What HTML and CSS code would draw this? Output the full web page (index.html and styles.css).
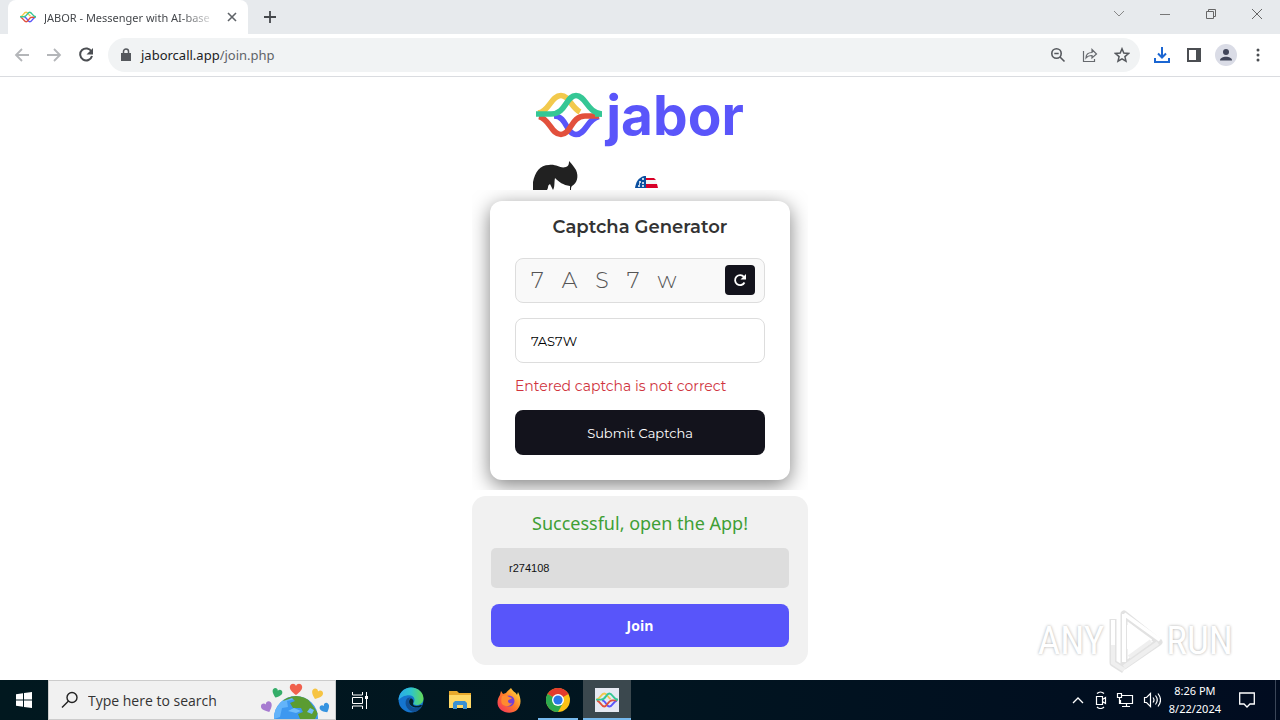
FILE: index.html
```html
<!DOCTYPE html>
<html lang="en">

<head>
  <meta charset="UTF-8" />
  <meta name="viewport" content="width=device-width, initial-scale=1.0" />
  <title>JABOR - Messenger with AI-based translation</title>
  <link rel="stylesheet" href="styles.css">
</head>

<body>

  <!-- Shared wave mark -->
  <svg class="defs" width="0" height="0" aria-hidden="true">
    <symbol id="wave" viewBox="0 0 66 46">
      <g fill="none" stroke-width="5.600">
        <path stroke="#f2c94c" d="M2 21C13 20 15 3.500 25 3.500C33 3.500 35 15 44 20" />
        <path stroke="#5a55fa" d="M18 24C31 24 30 42.500 40 42.500S51 27 63 24.500" />
        <path stroke="#e2503c" d="M3 24.500C14 27 15 42.500 25 42.500S35 24 49 24H63" />
        <path stroke="#35c795" d="M0 22H15C30 22 30 3.500 40 3.500C50 3.500 51 21 66 22" />
        <path stroke="#35c795" stroke-width="5" d="M59 22.300H66" />
      </g>
    </symbol>
  </svg>

  <!-- Browser tabs -->
  <header class="tab-bar">
    <div class="tab">
      <svg class="tab-icon" width="16" height="14"><use href="#wave" /></svg>
      <span class="tab-title">JABOR - Messenger with AI-base</span>
      <button class="icon-btn" aria-label="Close tab">
        <svg width="10" height="10" viewBox="0 0 10 10"><path d="M1 1l8 8M9 1l-8 8" stroke="#5f6368" stroke-width="1.600" /></svg>
      </button>
    </div>
    <button class="icon-btn new-tab" aria-label="New tab">
      <svg width="12" height="12" viewBox="0 0 12 12"><path d="M6 0v12M0 6h12" stroke="#45484c" stroke-width="1.800" /></svg>
    </button>
    <div class="window-controls">
      <button class="icon-btn" aria-label="Search tabs">
        <svg width="12" height="12" viewBox="0 0 12 12"><path d="M1 3l5 5 5-5" fill="none" stroke="#888" /></svg>
      </button>
      <button class="icon-btn" aria-label="Minimize">
        <svg width="12" height="12" viewBox="0 0 12 12"><path d="M1 6.500h10" stroke="#777" /></svg>
      </button>
      <button class="icon-btn" aria-label="Restore">
        <svg width="12" height="12" viewBox="0 0 12 12"><path d="M1.500 3.500h7v7h-7zM3.500 3.500v-2h7v7h-2" fill="none" stroke="#666" /></svg>
      </button>
      <button class="icon-btn" aria-label="Close">
        <svg width="12" height="12" viewBox="0 0 12 12"><path d="M1 1l10 10M11 1L1 11" stroke="#666" /></svg>
      </button>
    </div>
  </header>

  <!-- Toolbar -->
  <nav class="toolbar">
    <button class="icon-btn" aria-label="Back">
      <svg width="16" height="16" viewBox="0 0 16 16"><path d="M15 8H2M8 2L2 8l6 6" fill="none" stroke="#b4b6b9" stroke-width="1.800" /></svg>
    </button>
    <button class="icon-btn" aria-label="Forward">
      <svg width="16" height="16" viewBox="0 0 16 16"><path d="M1 8h13M8 2l6 6-6 6" fill="none" stroke="#b4b6b9" stroke-width="1.800" /></svg>
    </button>
    <button class="icon-btn" aria-label="Reload">
      <svg width="16" height="16" viewBox="0 0 16 16"><path d="M13.500 4.600A6 6 0 1 0 14 9" fill="none" stroke="#4b4e52" stroke-width="2" /><path d="M15 1v6.500H8.500z" fill="#4b4e52" /></svg>
    </button>
    <div class="address-bar">
      <svg width="10" height="14" viewBox="0 0 10 14"><path d="M0 5h10v8H0z" fill="#55585d" /><path d="M2.500 6V3.500a2.500 2.500 0 0 1 5 0V6" fill="none" stroke="#55585d" stroke-width="1.500" /></svg>
      <a class="url" href="#">jaborcall.app<span>/join.php</span></a>
      <button class="icon-btn" aria-label="Zoom">
        <svg width="16" height="16" viewBox="0 0 16 16"><circle cx="6.500" cy="6.500" r="4.700" fill="none" stroke="#55585d" stroke-width="1.600" /><path d="M10 10l4.500 4.500M4.300 6.500h4.400" stroke="#55585d" stroke-width="1.600" /></svg>
      </button>
      <button class="icon-btn" aria-label="Share">
        <svg width="16" height="16" viewBox="0 0 16 16"><path d="M1.500 4v10.500h11V12M4 11c0-4 2-5.500 6-5.500V2.500L14.500 7 10 11V8.500C7 8.500 5.500 9 4 11z" fill="none" stroke="#66696e" stroke-width="1.200" /></svg>
      </button>
      <button class="icon-btn" aria-label="Bookmark">
        <svg width="16" height="16" viewBox="0 0 16 16"><path d="M8 1.800l1.800 4.300 4.700.4-3.600 3.100 1.100 4.600L8 11.800l-4 2.400 1.100-4.600L1.500 6.500l4.700-.4z" fill="none" stroke="#55585d" stroke-width="1.500" /></svg>
      </button>
    </div>
    <button class="icon-btn" aria-label="Downloads">
      <svg width="18" height="18" viewBox="0 0 18 18"><path d="M9 1v10M5 7.500l4 4 4-4M2 12v4h14v-4" fill="none" stroke="#1b66d2" stroke-width="2" /></svg>
    </button>
    <button class="icon-btn" aria-label="Side panel">
      <svg width="14" height="14" viewBox="0 0 14 14"><path d="M1 1h12v12H1z" fill="none" stroke="#4b4e52" stroke-width="2" /><path d="M9 1h4v12H9z" fill="#4b4e52" /></svg>
    </button>
    <button class="icon-btn" aria-label="Profile">
      <svg width="22" height="22" viewBox="0 0 22 22"><circle cx="11" cy="11" r="11" fill="#dadce6" /><circle cx="11" cy="8" r="3" fill="#41465a" /><path d="M5 16.500c0-5 12-5 12 0z" fill="#41465a" /></svg>
    </button>
    <button class="icon-btn" aria-label="Menu">
      <svg width="4" height="14" viewBox="0 0 4 14"><g fill="#4b4e52"><circle cx="2" cy="2" r="1.500" /><circle cx="2" cy="7" r="1.500" /><circle cx="2" cy="12" r="1.500" /></g></svg>
    </button>
  </nav>

  <!-- Page -->
  <main class="page">
    <h1 class="logo">
      <svg width="66" height="46"><use href="#wave" /></svg>
      <span>jabor</span>
    </h1>

    <div class="badges">
      <svg width="48" height="30" viewBox="0 0 48 30">
        <path d="M1 30V22C3 12 8 5 17 5c8-1 11 4 17 2 3-1 3-4 3-6 3 3 5 6 7 9 3 7 1 13-4 16-1 1-1 2-1 4h-1v-4c-7-1-11-4-15-8-1 5 0 9-2 12l-3-6c-3 2-1 3-3 6z" fill="#212121" />
      </svg>
      <svg width="24" height="14" viewBox="0 0 24 14">
        <path d="M1 12C2 6 4 2 10 0h2v12z" fill="#0b50a0" />
        <path d="M12 2h8l2 2H12zM12 8h11l1 4H12z" fill="#d80027" />
        <path d="M12 4h10l1 4H12z" fill="#f3f3f3" />
        <path d="M5 6h2M8 3h2M8 7h2M4 10h2M8 10h2M5 8h1" stroke="#fff" stroke-width="1.600" />
      </svg>
    </div>

    <section class="captcha-frame">
      <form class="captcha">
        <h2>Captcha Generator</h2>
        <div class="captcha-code">
          <output><span>7</span> <span>A</span> <span>S</span> <span>7</span> <span>w</span></output>
          <button type="button" class="refresh" aria-label="Refresh captcha">
            <svg width="14" height="14" viewBox="0 0 14 14"><path d="M11 4A5 5 0 1 0 11.500 9.500" fill="none" stroke="#fff" stroke-width="1.800" /><path d="M13 1v5.500H7.500z" fill="#fff" /></svg>
          </button>
        </div>
        <input type="text" value="7AS7W" aria-label="Enter captcha" />
        <p class="message">Entered captcha is not correct</p>
        <button type="submit" class="submit">Submit Captcha</button>
      </form>
    </section>

    <form class="join">
      <label for="room">Successful, open the App!</label>
      <input type="text" id="room" value="r274108" />
      <button type="submit">Join</button>
    </form>
  </main>

  <!-- Watermark -->
  <div class="watermark">
    <span>ANY</span>
    <svg width="60" height="64" viewBox="0 0 60 64">
      <path d="M19 5v52L54 33zM8 10v44l11 7" fill="none" stroke="#e2e2e2" stroke-width="7" stroke-linejoin="round" />
      <path d="M19 5v48M19 5l36 26M8 11v25M24 16v24M24 16l22 16" fill="none" stroke="#fff" stroke-width="4" stroke-linejoin="round" />
      <path d="M19 58l34-24M8 36v18l11 7M24 48l22-16" fill="none" stroke="#efefef" stroke-width="4" />
    </svg>
    <span>RUN</span>
  </div>

  <!-- Taskbar -->
  <footer class="taskbar">
    <button class="task start" aria-label="Start">
      <svg width="16" height="16" viewBox="0 0 16 16"><path d="M0 2.200L7 1.200V7.500H0zM8 1.100L16 0v7.500H8zM0 8.500h7v6.300L0 13.800zM8 8.500h8V16l-8-1.100z" fill="#fff" /></svg>
    </button>
    <label class="search">
      <svg width="18" height="18" viewBox="0 0 18 18"><circle cx="11" cy="6.500" r="5" fill="none" stroke="#222" stroke-width="1.400" /><path d="M7.500 10L1 16.500" stroke="#222" stroke-width="1.400" /></svg>
      <input type="text" placeholder="Type here to search" />
      <svg class="earth" width="70" height="38" viewBox="0 0 70 38">
        <defs>
          <path id="heart" d="M0 6C-4 3-7 0-6-3-5-6-1-6 0-3 1-6 5-6 6-3 7 0 4 3 0 6z" />
          <clipPath id="globe"><circle cx="35" cy="37" r="22" /></clipPath>
        </defs>
        <circle cx="35" cy="37" r="22" fill="#3d98f0" />
        <g clip-path="url(#globe)">
          <path d="M13 38V24l8-9c9-4 15-3 13 3l-8 2 1 6-6 1-2 9z" fill="#63b4fa" />
          <path d="M22 20c4-6 13-7 24-3l11 15-3 6H39l-2-5 5-2-2-4h-8l-3-5 5-2-3-3z" fill="#5b9c32" />
          <path d="M27 30l6-3 7 3-5 2zM49 27l4 2-2 4-5-2z" fill="#70bdfa" />
        </g>
        <use href="#heart" fill="#f0604d" transform="translate(35 8)" />
        <use href="#heart" fill="#35ad69" transform="translate(16 12) rotate(20) scale(.8)" />
        <use href="#heart" fill="#f6c442" transform="translate(56 13) rotate(22) scale(.9)" />
        <use href="#heart" fill="#a67bd0" transform="translate(6 26) rotate(-25) scale(.9)" />
        <use href="#heart" fill="#3593e0" transform="translate(64 27) rotate(-28) scale(.8)" />
      </svg>
    </label>
    <button class="task task-view" aria-label="Task view">
      <svg width="18" height="18" viewBox="0 0 18 18"><path d="M1.500 1v3h10V1M1.500 6.500h10v6h-10zM1.500 18v-3h10v3M15.500 1v17" fill="none" stroke="#fff" /><path d="M14 5h3v3h-3z" fill="#fff" /></svg>
    </button>
    <button class="task" aria-label="Edge">
      <svg width="26" height="26" viewBox="0 0 24 24">
        <defs>
          <linearGradient id="edge" x2="1" y2="0"><stop offset="0" stop-color="#2ba9ea" /><stop offset=".5" stop-color="#2dc4cc" /><stop offset="1" stop-color="#64da54" /></linearGradient>
        </defs>
        <circle cx="12" cy="12" r="11.500" fill="#1575cf" />
        <path d="M.5 12C1 4 7 .5 12 .5c7 0 11.500 5 11.500 10 0 4-3 6-6 6-3 0-4-1-3-2 2-3 0-7-4-7-5 0-8 2-10 4.500z" fill="url(#edge)" />
        <path d="M8 11c-3 5 1 12 8 12 3-1 5-3 6-5-6 3-12 1-12-5 0-2 1-3 2-3-2-1-3 0-4 1z" fill="#124f92" />
        <path d="M11 11c-2 3 0 7 5 8 2 0 4 0 6-1.500 0-1 0-1-1-1-4 2-8 1-7-2 1-2-1-5-3-3.500z" fill="#04202c" />
      </svg>
    </button>
    <button class="task" aria-label="File Explorer">
      <svg width="22" height="20" viewBox="0 0 22 20"><path d="M0 1h8l2 2h12v15H0z" fill="#e8a92c" /><path d="M0 5h22v13H0z" fill="#ffd866" /><path d="M4 19v-6l2-2h10l2 2v6h-4v-4H8v4z" fill="#3990d2" /></svg>
    </button>
    <button class="task" aria-label="Firefox">
      <svg width="24" height="25" viewBox="0 0 24 25">
        <defs><linearGradient id="fox" x1="1" y1="0" x2="0" y2="1"><stop offset="0" stop-color="#fff044" /><stop offset=".5" stop-color="#ff7a28" /><stop offset="1" stop-color="#f32965" /></linearGradient></defs>
        <path d="M14 0c2 4 5 4 6 7l1-3c4 8 3 14-1 18-5 4-12 3-16 0C-1 18 0 11 3 7l1-4 2 3 3-1c1-2 3-3 5-5z" fill="url(#fox)" />
        <circle cx="12" cy="13" r="5.500" fill="#7540d4" />
        <path d="M5 8c3-2 6 0 7 1l3 1c-1 2-4 1-4 3 0 2 2 3 4 2-2 4-7 4-10 1-1-2-1-5 0-8z" fill="#ff8b30" />
      </svg>
    </button>
    <button class="task running" aria-label="Chrome">
      <svg width="24" height="24" viewBox="0 0 24 24">
        <circle cx="12" cy="12" r="12" fill="#fbc116" />
        <path d="M12 12L1.600 6A12 12 0 0 1 22.400 6z" fill="#e33b2e" />
        <path d="M1.600 6A12 12 0 0 0 12 24l5-9-5-3z" fill="#2da94f" />
        <circle cx="12" cy="12" r="6" fill="#fff" /><circle cx="12" cy="12" r="4.600" fill="#2a77e8" />
      </svg>
    </button>
    <button class="task running active" aria-label="Jabor">
      <svg width="24" height="24" viewBox="0 0 24 24"><path d="M0 0h24v24H0z" fill="#e6e9f2" /><use href="#wave" x="1" y="4" width="22" height="16" /></svg>
    </button>
    <div class="tray">
      <svg width="12" height="8" viewBox="0 0 12 8"><path d="M1 7l5-5 5 5" fill="none" stroke="#fff" stroke-width="1.300" /></svg>
      <svg width="14" height="18" viewBox="0 0 14 18"><path d="M3.500 5.500h6v8h-6zM9.500 8.500l3-2v6l-3-2M4 2.500c2-2 5-2 7 0M4 16c2 2 5 2 7 0" fill="none" stroke="#fff" stroke-width="1.200" /></svg>
      <svg width="18" height="16" viewBox="0 0 18 16"><path d="M6 3.500h10.500v8H4.500V8M10.500 12v2.500M6 14.500h8M1.500 1.500h4v4h-4zM3.500 5.500V12" fill="none" stroke="#fff" stroke-width="1.200" /></svg>
      <svg width="18" height="16" viewBox="0 0 18 16"><path d="M1.500 5.500h2l4-4v13l-4-4h-2zM10 5.500q2 2.500 0 5M12.500 3.500q3.500 4.500 0 9M15 1.500q5 6.500 0 13" fill="none" stroke="#fff" stroke-width="1.200" /></svg>
    </div>
    <time class="clock">8:26 PM<br>8/22/2024</time>
    <button class="task notifications" aria-label="Notifications">
      <svg width="16" height="16" viewBox="0 0 16 16"><path d="M.7 1h14.600v11H11l-3 3-3-3H.7z" fill="none" stroke="#fff" stroke-width="1.300" /></svg>
    </button>
  </footer>

</body>

</html>
```
FILE: styles.css
```css
* {
  margin: 0;
  padding: 0;
  box-sizing: border-box;
}

body {
  font-family: 'Noto Sans', sans-serif;
  background: #fff;
  display: flex;
  flex-direction: column;
  min-height: 100vh;
  position: relative;
}

button,
input {
  font-family: inherit;
  border: none;
  outline: none;
}

button {
  cursor: pointer;
}

svg {
  display: block;
  flex-shrink: 0;
}

.defs {
  position: absolute;
}

.icon-btn {
  background: none;
  width: 16px;
  display: flex;
  justify-content: center;
  align-items: center;
  flex-shrink: 0;
}

/* Browser tabs */
.tab-bar {
  display: flex;
  align-items: center;
  height: 34px;
  padding-left: 8px;
  background: #e7eaed;
}

.tab {
  display: flex;
  align-items: center;
  gap: 8px;
  width: 240px;
  height: 34px;
  padding: 0 8px 0 12px;
  background: #fff;
  border-radius: 8px 8px 0 0;
}

.tab-title {
  flex: 1;
  white-space: nowrap;
  font-size: 11px;
  color: #45484c;
  mask-image: linear-gradient(to right, #000 80%, transparent);
}

.new-tab {
  margin-left: 14px;
}

.window-controls {
  display: flex;
  gap: 30px;
  margin: 0 15px 6px auto;
}

/* Toolbar */
.toolbar {
  display: flex;
  align-items: center;
  gap: 16px;
  height: 43px;
  padding: 0 14px;
  border-bottom: 1px solid #dadce0;
}

.address-bar {
  flex: 1;
  display: flex;
  align-items: center;
  gap: 16px;
  height: 34px;
  margin: 0 -2px;
  padding: 0 10px 0 13px;
  border-radius: 17px;
  background: #f1f3f4;
}

.url {
  flex: 1;
  margin-left: -6px;
  font-size: 13px;
  color: #202124;
  text-decoration: none;
}

.url span {
  color: #5f6368;
}

/* Page */
.page {
  flex: 1;
  display: flex;
  flex-direction: column;
  align-items: center;
  padding: 0 16px 15px;
}

.logo {
  display: flex;
  align-items: center;
  gap: 4px;
  height: 76px;
  font-family: 'Inter', sans-serif;
  font-size: 55px;
  line-height: 76px;
  font-weight: 700;
  color: #5a55fa;
}

.badges {
  display: flex;
  align-items: flex-end;
  gap: 54px;
  width: 216px;
  padding-top: 7px;
}

.captcha-frame {
  width: 100%;
  max-width: 336px;
  padding: 11px 18px 10px;
  overflow: hidden;
}

.captcha {
  padding: 12px 25px 25px;
  background: #fff;
  border-radius: 12px;
  box-shadow: 0 5px 20px rgba(0, 0, 0, 0.5);
  font-family: 'Montserrat', 'Inter', sans-serif;
}

.captcha h2 {
  margin-bottom: 17px;
  text-align: center;
  font-size: 18px;
  line-height: 28px;
  font-weight: 600;
  color: #333;
}

.captcha-code {
  display: flex;
  justify-content: space-between;
  align-items: center;
  height: 45px;
  padding: 0 9px 0 15px;
  border: 1px solid #ddd;
  border-radius: 8px;
  background: #f9f9f9;
}

.captcha-code output {
  display: flex;
  gap: 18px;
  font-size: 22px;
  color: #555;
  font-weight: 300;
}

.refresh {
  display: flex;
  justify-content: center;
  align-items: center;
  width: 30px;
  height: 30px;
  margin-bottom: 2px;
  border-radius: 4px;
  background: #13131c;
}

.captcha input {
  width: 100%;
  height: 45px;
  margin-top: 15px;
  padding: 0 15px;
  border: 1px solid #ddd;
  border-radius: 8px;
  font-size: 13px;
  color: #000;
}

.message {
  margin: 14px 0;
  font-size: 14px;
  line-height: 19px;
  color: #d0343e;
}

.submit {
  width: 100%;
  height: 45px;
  border-radius: 8px;
  background: #13131c;
  color: #fff;
  font-size: 13px;
}

/* Join form */
.join {
  display: flex;
  flex-direction: column;
  width: 100%;
  max-width: 336px;
  margin-top: 6px;
  padding: 15px 19px 18px;
  border-radius: 14px;
  background: #f1f1f1;
}

.join label {
  margin-bottom: 12px;
  text-align: center;
  font-size: 18px;
  line-height: 25px;
  color: #3f9f35;
}

.join input {
  height: 40px;
  margin-bottom: 16px;
  padding: 0 18px;
  border-radius: 5px;
  background: #ddd;
  font-family: 'Liberation Sans', sans-serif;
  font-size: 11px;
  color: #111;
}

.join button {
  height: 43px;
  border-radius: 8px;
  background: #5855fa;
  color: #fff;
  font-family: 'Open Sans', sans-serif;
  font-size: 14px;
  font-weight: 700;
}

/* Watermark */
.watermark {
  position: absolute;
  right: 47px;
  bottom: 47px;
  display: flex;
  align-items: center;
  gap: 1px;
  font-family: 'Roboto Condensed', 'Roboto', sans-serif;
  font-size: 39px;
  line-height: 64px;
  color: #fff;
  text-shadow: 0 0 3px #aaa;
}

/* Taskbar */
.taskbar {
  display: flex;
  align-items: stretch;
  flex-shrink: 0;
  height: 40px;
  background: linear-gradient(to right, #01181f, #011520 50%, #010c20);
}

.task {
  display: flex;
  justify-content: center;
  align-items: center;
  width: 48px;
  margin-right: 1px;
  background: none;
}

.start {
  margin-right: 0;
}

.task-view {
  margin-right: 3px;
}

.running {
  border-bottom: 2px solid #76b9ed;
  padding-top: 2px;
  width: 40px;
  margin: 0 5px 0 4px;
}

.active {
  width: 48px;
  margin: 0;
  background: #3b484e;
}

.search {
  display: flex;
  align-items: center;
  gap: 9px;
  width: 288px;
  padding-left: 12px;
  border: 1px solid #ccc;
  background: #f1f1f1;
}

.search input {
  flex: 1;
  min-width: 0;
  background: none;
  font-family: 'Open Sans', sans-serif;
  font-size: 14px;
}

.search input::placeholder {
  color: #333;
}

.earth {
  align-self: flex-end;
  margin-right: 4px;
}

.tray {
  display: flex;
  align-items: center;
  gap: 9px;
  margin-left: auto;
}

.clock {
  padding: 2px 8px;
  text-align: center;
  font-size: 11px;
  line-height: 18px;
  color: #fff;
}

.notifications {
  width: 38px;
  margin: 0 4px 0 9px;
  padding-right: 20px;
  border-right: 1px solid #3b4658;
}
```
